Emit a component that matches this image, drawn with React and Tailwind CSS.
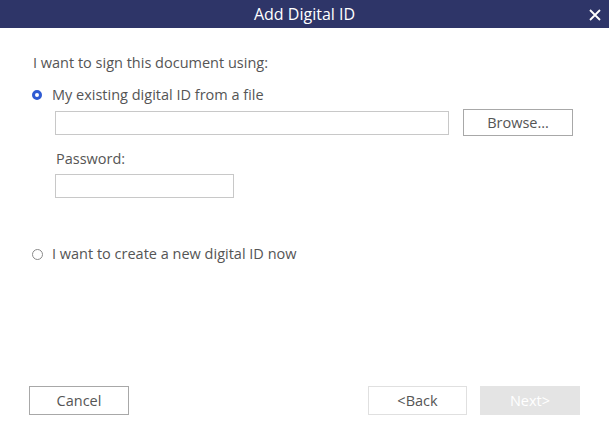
import React, { useState } from 'react';

const Radio = ({ checked }) => (
    <span
        className={
            checked
                ? 'w-[10px] h-[10px] rounded-full border-[3px] border-[#2f5bd3] bg-white shrink-0'
                : 'w-[11px] h-[11px] rounded-full border border-[#8a8a8a] bg-white shrink-0'
        }
    ></span>
);

const App = () => {
    const [mode, setMode] = useState('file');

    return (
        <div className="w-[609px] h-[445px] bg-white flex flex-col text-[14.5px] text-[#555]" style={{ fontFamily: '"Open Sans", "Noto Sans", sans-serif' }}>
            {/* заголовок */}
            <div className="h-[28px] bg-[#2e3568] flex items-center justify-center relative shrink-0">
                <span className="text-white text-[16px]">Add Digital ID</span>
                <button className="absolute right-[8px] top-[9px] w-[12px] h-[12px]">
                    <svg width="12" height="12" viewBox="0 0 12 12">
                        <path d="M1 1 L11 11 M11 1 L1 11" stroke="white" strokeWidth="1.8" />
                    </svg>
                </button>
            </div>

            <div className="flex-1 flex flex-col pl-[33px] pr-[36px] pt-[26px]">
                <div className="leading-[18px]">I want to sign this document using:</div>

                <button className="flex items-center gap-[10px] mt-[14px] -ml-[1px]" onClick={() => setMode('file')}>
                    <Radio checked={mode === 'file'} />
                    <span className="text-[#555] leading-[18px]">My existing digital ID from a file</span>
                </button>

                <div className="pl-[22px] mt-[5px] flex flex-col">
                    <div className="flex items-center gap-[14px]">
                        <input className="w-[394px] h-[24px] border border-[#c8c8c8] outline-none" />
                        <button className="w-[110px] h-[27px] border border-[#a8a8a8] text-[#555] text-[14.5px] leading-[18px]">Browse...</button>
                    </div>
                    <div className="mt-[14px] pl-[1px] leading-[18px]">Password:</div>
                    <input type="password" className="mt-[6px] w-[179px] h-[24px] border border-[#c8c8c8] outline-none" />
                </div>

                <button className="flex items-center gap-[9px] mt-[47px] -ml-[1px]" onClick={() => setMode('new')}>
                    <Radio checked={mode === 'new'} />
                    <span className="text-[#555] leading-[18px]">I want to create a new digital ID now</span>
                </button>

                <div className="flex-1"></div>

                <div className="flex items-center -ml-[4px] mb-[30px]">
                    <button className="w-[100px] h-[29px] border border-[#a8a8a8] text-[#555] leading-[18px]">Cancel</button>
                    <div className="flex-1"></div>
                    <button className="w-[99px] h-[29px] border border-[#e0e0e0] text-[#555] leading-[18px]">&lt;Back</button>
                    <button className="w-[100px] h-[29px] ml-[13px] mr-[-7px] bg-[#e4e4e4] text-white leading-[18px]" disabled>Next&gt;</button>
                </div>
            </div>
        </div>
    );
};

export default App;
